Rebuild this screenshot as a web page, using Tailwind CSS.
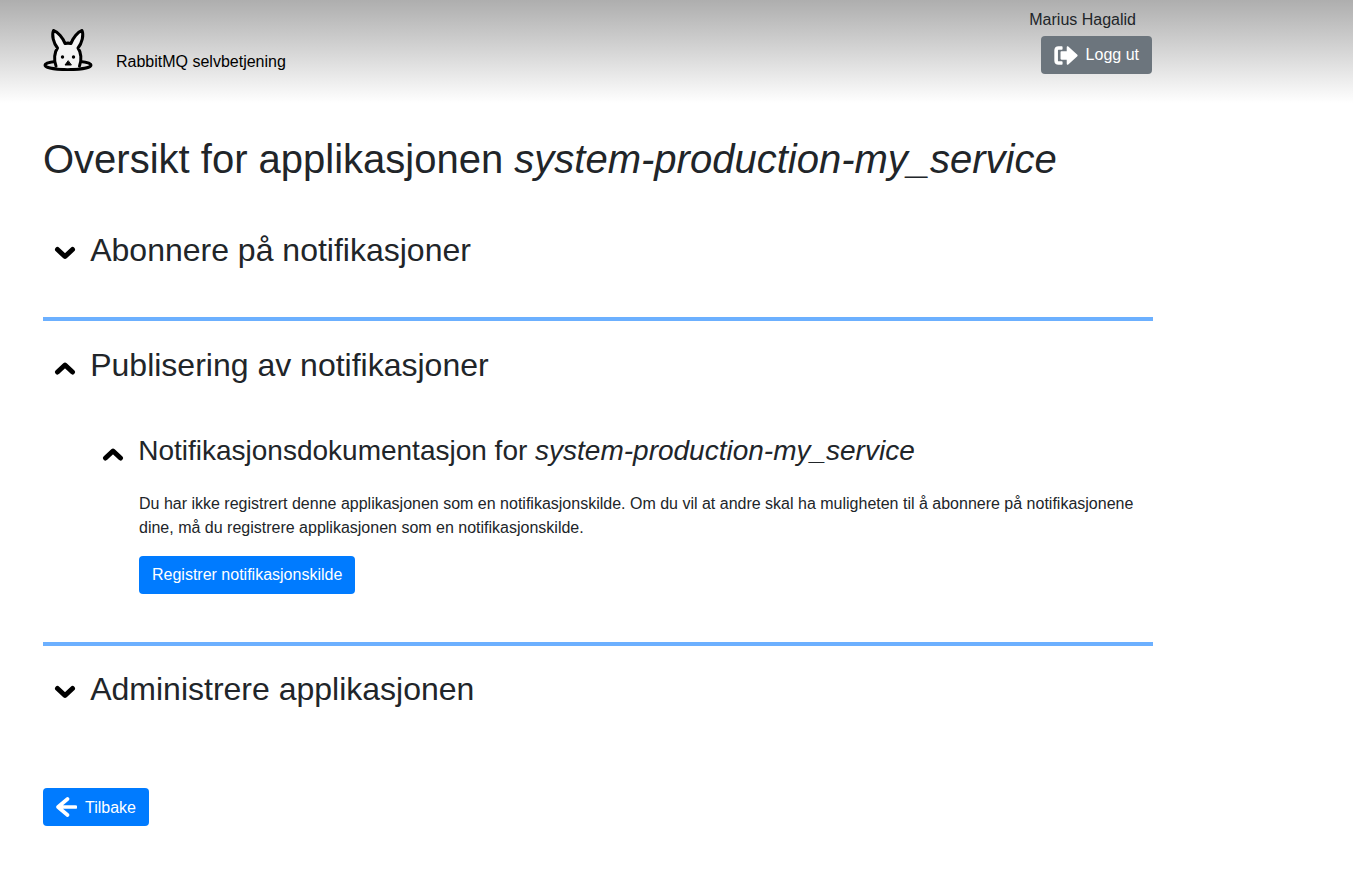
<!DOCTYPE html>
<html lang="en">

<head>
  <meta charset="UTF-8">
  <meta name="viewport" content="width=device-width, initial-scale=1.0">
  <title>RabbitMQ selvbetjening</title>
  <script src="https://cdn.jsdelivr.net/npm/@tailwindcss/browser@4"></script>
</head>

<body class="bg-white text-[#212529] font-['Liberation_Sans',Arial,sans-serif] text-base">
  <!-- Header -->
  <header class="h-[103px] bg-gradient-to-b from-[#aeaeae] to-white">
    <div class="w-[1110px] ml-[43px] flex justify-between">
      <div class="flex items-start pt-[28px]">
        <svg class="w-[50px] h-[44px]" viewBox="0 0 50 44" fill="none" stroke="black" stroke-width="3" stroke-linejoin="round" stroke-linecap="round">
          <path d="M13 33.500C6 34 2 35.500 2 37C2 39.500 12 41.500 25 41.500C38 41.500 48 39.500 48 37C48 35.500 44 34 37 33.500" />
          <path d="M13 39C10.500 32 11.500 24 14.500 20C10.500 15 8.500 7 10.500 2.500C15 4 20 10 22 15.500C24 15 26 15 28 15.500C30 10 34.500 4 39 2.500C41 7 39 15 35 20C38 24 39 32 36.500 39C30 40.500 19 40.500 13 39Z" fill="#f4f4f4" stroke-width="0" />
          <path d="M13 38C10.500 32 11.500 24 14.500 20C10.500 15 8.500 7 10.500 2.500C15 4 20 10 22 15.500C24 15 26 15 28 15.500C30 10 34.500 4 39 2.500C41 7 39 15 35 20C38 24 39 32 36.500 38" />
          <circle cx="19.500" cy="29" r="1.700" fill="black" stroke="none" />
          <circle cx="30.500" cy="29" r="1.700" fill="black" stroke="none" />
          <path d="M25 33L22 37H28Z" fill="black" stroke-width="1" />
        </svg>
        <span class="ml-[23px] mt-[24px] text-black leading-[20px]">RabbitMQ selvbetjening</span>
      </div>
      <div class="flex flex-col items-end pt-[8px]">
        <span class="mr-[17px] leading-[24px]">Marius Hagalid</span>
        <a href="#" class="mt-[4px] mr-[1px] h-[38px] px-[13px] flex items-center gap-[8px] rounded bg-[#6c757d] text-white">
          <svg class="w-[24px] h-[19px]" viewBox="0.800 0.800 23 18.400" fill="white">
            <path d="M8 1H5C2.500 1 1 2.500 1 5V15C1 17.500 2.500 19 5 19H8C8.600 19 9 18.600 9 18V16.500C9 15.900 8.600 15.500 8 15.500H5C4.700 15.500 4.500 15.300 4.500 15V5C4.500 4.700 4.700 4.500 5 4.500H8C8.600 4.500 9 4.100 9 3.500V2C9 1.400 8.600 1 8 1Z" />
            <path d="M14.500 1.300C14 0.800 13 1.100 13 2V6H8C7.400 6 7 6.400 7 7V13C7 13.600 7.400 14 8 14H13V18C13 18.900 14 19.200 14.500 18.700L23.300 10.700C23.700 10.300 23.700 9.700 23.300 9.300Z" />
          </svg>
          Logg ut
        </a>
      </div>
    </div>
  </header>

  <main class="w-[1110px] ml-[43px]">
    <h1 class="mt-[32px] text-[40px] leading-[48px] font-medium">Oversikt for applikasjonen <em>system-production-my_service</em></h1>

    <!-- Abonnere -->
    <section class="mt-[48px] h-[86px]">
      <h2 class="flex items-center text-[32px] leading-[38px] font-medium pl-[11px]">
        <svg class="w-[22px] h-[16px] mt-[6px] mr-[14.200px]" viewBox="0 0 22 16" fill="none" stroke="black" stroke-width="5" stroke-linecap="round" stroke-linejoin="round"><path d="M3.500 4.500L11 11.500L18.500 4.500" /></svg>
        Abonnere på notifikasjoner
      </h2>
    </section>
    <hr class="border-0 h-[4px] bg-[#6cb0ff]">

    <!-- Publisering -->
    <section class="h-[321px] pt-[25px]">
      <h2 class="flex items-center text-[32px] leading-[38px] font-medium pl-[11px]">
        <svg class="w-[22px] h-[16px] mt-[6px] mr-[14.200px]" viewBox="0 0 22 16" fill="none" stroke="black" stroke-width="5" stroke-linecap="round" stroke-linejoin="round"><path d="M3.500 12L11 5L18.500 12" /></svg>
        Publisering av notifikasjoner
      </h2>
      <div class="pl-[96px] mt-[50px]">
        <h3 class="flex items-center text-[28px] leading-[34px] font-medium -ml-[37px]">
          <svg class="w-[22px] h-[16px] mt-[6px] mr-[14.200px]" viewBox="0 0 22 16" fill="none" stroke="black" stroke-width="5" stroke-linecap="round" stroke-linejoin="round"><path d="M3.500 12L11 5L18.500 12" /></svg>
          <span>Notifikasjonsdokumentasjon for <em>system-production-my_service</em></span>
        </h3>
        <p class="mt-[24px] leading-[24px]">Du har ikke registrert denne applikasjonen som en notifikasjonskilde. Om du vil at andre skal ha muligheten til å abonnere på notifikasjonene dine, må du registrere applikasjonen som en notifikasjonskilde.</p>
        <a href="#" class="inline-flex items-center mt-[16px] h-[38px] px-[13px] rounded bg-[#007bff] text-white">Registrer notifikasjonskilde</a>
      </div>
    </section>
    <hr class="border-0 h-[4px] bg-[#6cb0ff]">

    <!-- Administrere -->
    <section class="pt-[24px] h-[142px]">
      <h2 class="flex items-center text-[32px] leading-[38px] font-medium pl-[11px]">
        <svg class="w-[22px] h-[16px] mt-[6px] mr-[14.200px]" viewBox="0 0 22 16" fill="none" stroke="black" stroke-width="5" stroke-linecap="round" stroke-linejoin="round"><path d="M3.500 4.500L11 11.500L18.500 4.500" /></svg>
        Administrere applikasjonen
      </h2>
    </section>

    <a href="#" class="inline-flex items-center gap-[8px] h-[38px] px-[13px] rounded bg-[#007bff] text-white">
      <svg class="w-[21px] h-[20px]" viewBox="0 0 21 20" fill="none" stroke="white" stroke-width="3.600" stroke-linecap="round" stroke-linejoin="round"><path d="M11.500 2L2 10L11.500 18M3 10H19.500" /></svg>
      <span class="mt-[1px]">Tilbake</span>
    </a>
  </main>
</body>

</html>
